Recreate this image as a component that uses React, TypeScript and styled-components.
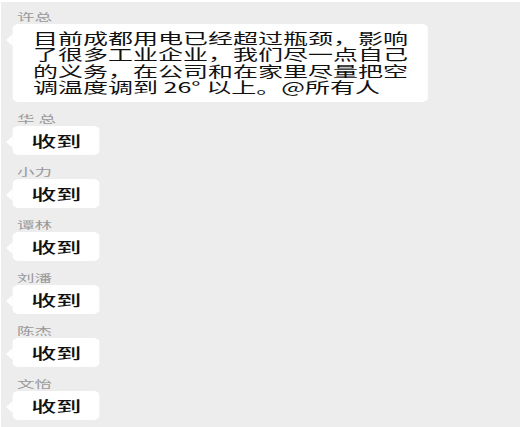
import React from "react";
import styled, { createGlobalStyle } from "styled-components";

// the screenshot is stretched sideways, so the chat column is laid out
// narrow and widened with one scaleX on the column
const STRETCH = 1.667;

const GlobalStyle = createGlobalStyle`
  html, body {
    margin: 0;
    padding: 0;
    background: #ffffff;
  }
  body {
    font-family: "Noto Sans CJK SC", "Noto Sans", sans-serif;
  }
`;

const Stage = styled.div`
  width: 522px;
  height: 427px;
  box-sizing: border-box;
  padding: 2px 2px 0 1px;
  overflow: hidden;
`;

const Panel = styled.div`
  height: 100%;
  background: #ededed;
  overflow: hidden;
`;

const Column = styled.div`
  width: ${100 / STRETCH}%;
  transform: scaleX(${STRETCH});
  transform-origin: 0 0;
  box-sizing: border-box;
  padding: 7.5px 0 0 7.2px;
  display: flex;
  flex-direction: column;
  gap: 10px;
`;

const Message = styled.div`
  display: flex;
  flex-direction: column;
  align-items: flex-start;
  gap: 1px;
`;

const Name = styled.div`
  padding-left: 2.4px;
  font-size: 10.5px;
  line-height: 13px;
  color: #999999;
  white-space: pre;
`;

const Bubble = styled.div<{ $long?: boolean }>`
  position: relative;
  box-sizing: border-box;
  background: #ffffff;
  border-radius: 4px;
  color: #111111;
  font-size: 15px;
  ${(p) =>
    p.$long
      ? `
    max-width: 248.5px;
    padding: 6px 11px 6px 12px;
    line-height: 16.5px;
  `
      : `
    height: 29px;
    padding: 0 11px;
    line-height: 29px;
    font-weight: 500;
  `}

  &::before {
    content: "";
    position: absolute;
    left: -4.5px;
    top: 10px;
    border-style: solid;
    border-width: 6px 4.5px 6px 0;
    border-color: transparent #ffffff transparent transparent;
  }
`;

const replies = ["华 总", "小力", "谭林", "刘潘", "陈杰", "文怡"];

export default function App() {
  return (
    <>
      <GlobalStyle />
      <Stage>
        <Panel>
          <Column>
            <Message>
              <Name>许总</Name>
              <Bubble $long>
                目前成都用电已经超过瓶颈，影响了很多工业企业，我们尽一点自己的义务，在公司和在家里尽量把空调温度调到 26° 以上。@所有人
              </Bubble>
            </Message>
            {replies.map((name) => (
              <Message key={name}>
                <Name>{name}</Name>
                <Bubble>收到</Bubble>
              </Message>
            ))}
          </Column>
        </Panel>
      </Stage>
    </>
  );
}
